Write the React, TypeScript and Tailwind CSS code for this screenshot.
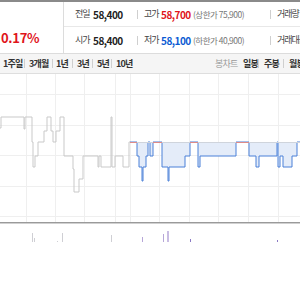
import React from "react";

const font = { fontFamily: '"Noto Sans CJK KR", "Noto Sans", "Liberation Sans", sans-serif' };

function Sep() {
  return <span className="inline-block w-px h-[9px] bg-[#cfcfcf] shrink-0" />;
}

const grayPts: [number, number][] = [
  [0, 129], [1, 129], [1, 118], [24, 118], [24, 130], [25, 130], [25, 118], [32, 118], [32, 143], [33, 143], [33, 168], [35, 168], [35, 157], [38, 157], [38, 143], [44, 143], [44, 132], [47, 132], [47, 118], [51, 118], [51, 132], [53, 132], [53, 143], [56, 143], [56, 132], [60, 132], [60, 118], [64, 118], [64, 157], [73, 157], [73, 170], [74, 170], [74, 193], [79, 193], [79, 180], [83, 180], [83, 157], [98, 157], [98, 168], [99, 168], [99, 157], [101, 157], [101, 168], [111, 168], [111, 118], [112, 118], [112, 168], [115, 168], [115, 157], [123, 157], [123, 168], [129, 168], [129, 143], [130, 143],
];

const bluePts: [number, number][] = [
  [130, 143], [137, 143], [137, 157], [139, 157], [139, 168], [142, 168], [142, 182], [143, 182], [143, 168], [146, 168], [146, 157], [148, 157], [148, 143], [150, 143], [150, 157], [153, 157], [153, 143], [162, 143], [162, 168], [168, 168], [168, 182], [169, 182], [169, 168], [185, 168], [185, 157], [190, 157], [190, 143], [198, 143], [198, 168], [200, 168], [200, 157], [236, 157], [236, 143], [249, 143], [249, 157], [256, 157], [256, 168], [259, 168], [259, 157], [277, 157], [277, 143], [278, 143], [278, 168], [280, 168], [280, 157], [283, 157], [283, 168], [292, 168], [292, 157], [297, 157], [297, 143], [300, 143],
];

function toPath(pts: [number, number][]) {
  return pts.map((p, i) => `${i === 0 ? "M" : "L"}${p[0]},${p[1]}`).join(" ");
}

const label = "text-[9px] text-[#444] tracking-[-1px] shrink-0";
const num = "text-[10px] font-bold tracking-[-0.5px] shrink-0";
const paren = "text-[8.5px] text-[#777] tracking-[-0.5px] shrink-0";

export default function App() {
  const vLines = [26, 55, 84, 115, 130, 159, 189, 218, 248, 278];
  const hLines = [95, 126, 156, 187, 217];
  const blueFill = toPath(bluePts) + " L300,143 L130,143 Z";
  const bars: { x: number; y: number; c: string; w?: number }[] = [
    { x: 32, y: 234, c: "#cfcfd4" },
    { x: 34, y: 239, c: "#cfcfd4" },
    { x: 57, y: 242, c: "#cfcfd4" },
    { x: 62, y: 234, c: "#cfcfd4" },
    { x: 111, y: 236, c: "#cfcfd4" },
    { x: 142, y: 238, c: "#b6a6d8" },
    { x: 163, y: 235, c: "#b6a6d8" },
    { x: 167, y: 232, c: "#c9bde3", w: 2 },
    { x: 190, y: 240, c: "#8a79c4" },
    { x: 277, y: 241, c: "#8a79c4" },
  ];
  return (
    <div className="w-[300px] h-[300px] overflow-hidden bg-white relative" style={font}>
      <div className="h-[2px] bg-[#8a8a8a]" />
      <div className="flex h-[52px] border-b border-[#dcdcdc]">
        <div className="w-[64px] shrink-0 border-r border-[#dcdcdc] flex items-center">
          <span className="text-[13px] font-bold text-[#e0151b] pl-[1px] mt-[20px] leading-none tracking-[-0.3px]">0.17%</span>
        </div>
        <div className="flex-1 flex flex-col text-[#222] whitespace-nowrap">
          <div className="h-[25px] border-b border-[#e8e8e8] flex items-center">
            <div className="w-[73px] pl-[11px] flex items-center shrink-0">
              <span className={`${label} w-[18px]`}>전일</span>
              <span className={num}>58,400</span>
            </div>
            <Sep />
            <div className="w-[132px] pl-[6px] flex items-center shrink-0">
              <span className={`${label} w-[17px]`}>고가</span>
              <span className={`${num} text-[#e0151b] w-[32px]`}>58,700</span>
              <span className={paren}>(상한가 75,900)</span>
            </div>
            <Sep />
            <div className="pl-[6px] flex items-center gap-[4px]">
              <span className={label}>거래량</span>
              <span className={num}>1</span>
            </div>
          </div>
          <div className="h-[26px] flex items-center">
            <div className="w-[73px] pl-[11px] flex items-center shrink-0">
              <span className={`${label} w-[18px]`}>시가</span>
              <span className={num}>58,400</span>
            </div>
            <Sep />
            <div className="w-[132px] pl-[6px] flex items-center shrink-0">
              <span className={`${label} w-[17px]`}>저가</span>
              <span className={`${num} text-[#0b5bd3] w-[32px]`}>58,100</span>
              <span className={paren}>(하한가 40,900)</span>
            </div>
            <Sep />
            <div className="pl-[6px] flex items-center gap-[4px]">
              <span className={label}>거래대금</span>
              <span className={num}>1</span>
            </div>
          </div>
        </div>
      </div>
      <div className="h-[20px] bg-[#f5f5f5] border-b border-[#dedede] flex items-center text-[9px] font-bold text-[#333] whitespace-nowrap tracking-[-0.8px]">
        <div className="flex items-center pl-[3px] shrink-0">
          <span className="w-[21px] shrink-0">1주일</span><Sep />
          <span className="w-[23px] ml-[4px] shrink-0">3개월</span><Sep />
          <span className="w-[16px] ml-[3px] shrink-0">1년</span><Sep />
          <span className="w-[15px] ml-[4px] shrink-0">3년</span><Sep />
          <span className="w-[14px] ml-[4px] shrink-0">5년</span><Sep />
          <span className="w-[14px] ml-[4px] shrink-0">10년</span>
        </div>
        <div className="flex items-center ml-[85px] shrink-0">
          <span className="w-[28px] text-[#9a9a9a] font-normal shrink-0">봉차트</span>
          <span className="w-[15px] shrink-0">일봉</span><Sep />
          <span className="w-[19px] ml-[5px] shrink-0">주봉</span><Sep />
          <span className="ml-[5px] shrink-0">월봉</span>
        </div>
      </div>
      <svg width="300" height="225" viewBox="0 75 300 225" className="block">
        {hLines.map((y) => (
          <line key={"h" + y} x1="0" x2="300" y1={y + 0.5} y2={y + 0.5} stroke="#efefef" />
        ))}
        {vLines.map((x) => (
          <line key={"v" + x} x1={x + 0.5} x2={x + 0.5} y1="75" y2="223" stroke="#efefef" />
        ))}
        <path d={toPath(grayPts)} fill="none" stroke="#c9c9c9" strokeWidth="1" />
        <path d={blueFill} fill="#e4ecf9" />
        <path d={toPath(bluePts)} fill="none" stroke="#4a80d8" strokeWidth="1" />
        <line x1="130" x2="300" y1="143.5" y2="143.5" stroke="#cfd4dc" strokeWidth="1" />
        {[[153, 162], [190, 198], [236, 249], [130, 137]].map(([a, b]) => (
          <line key={"r" + a} x1={a} x2={b} y1="143.5" y2="143.5" stroke="#de8a88" strokeWidth="1" />
        ))}
        <line x1="0" x2="300" y1="223.5" y2="223.5" stroke="#9a9a9a" />
        <line x1="0" x2="300" y1="224.5" y2="224.5" stroke="#d0d0d0" />
        {bars.map((b, i) => (
          <rect key={i} x={b.x} y={b.y} width={b.w ?? 1} height={243 - b.y} fill={b.c} />
        ))}
      </svg>
    </div>
  );
}
